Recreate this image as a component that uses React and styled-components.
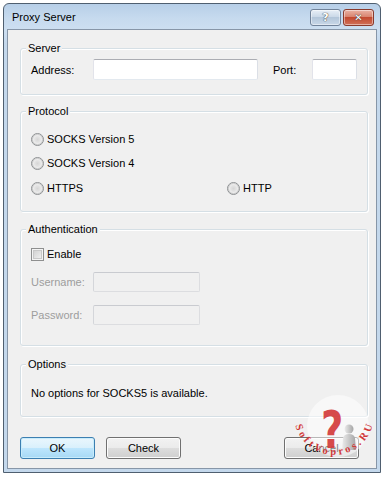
import React from "react";
import styled, { createGlobalStyle } from "styled-components";

const GlobalStyle = createGlobalStyle`
  body {
    margin: 0;
    background: #fff;
    font-family: "Liberation Sans", Arial, sans-serif;
    font-size: 11px;
    color: #000;
  }
`;

const Window = styled.div`
  position: relative;
  box-sizing: border-box;
  margin: 3px 0 0 3px;
  width: 378px;
  height: 470px;
  display: flex;
  flex-direction: column;
  padding: 0 3px 3px;
  border: 1px solid #4f5f70;
  border-radius: 6px 6px 0 0;
  background: linear-gradient(#b7cfe8 0px, #c6daee 14px, #cddff1 26px, #c4d8ec 40px, #c4d8ec 100%);
`;

const TitleBar = styled.div`
  height: 25px;
  display: flex;
  align-items: center;
  padding-left: 5px;
  padding-right: 3px;
`;

const Title = styled.span`
  flex: 1;
  font-size: 11px;
  color: #000;
`;

const CaptionButton = styled.div`
  box-sizing: border-box;
  width: 31px;
  height: 17px;
  margin-top: 1px;
  margin-left: 2px;
  border: 1px solid ${(p) => (p.$close ? "#8a3a2c" : "#71839a")};
  border-radius: 3px;
  display: flex;
  align-items: center;
  justify-content: center;
  font-family: "DejaVu Sans", sans-serif;
  font-weight: bold;
  font-size: ${(p) => (p.$close ? "10px" : "11px")};
  color: #fff;
  text-shadow: 0 0 1px #3a3a3a, 0 0 1px #3a3a3a;
  box-shadow: inset 0 0 0 1px rgba(255, 255, 255, 0.45);
  background: ${(p) =>
    p.$close
      ? "linear-gradient(#eab2a4, #d98570 45%, #c34a30 50%, #d07058 100%)"
      : "linear-gradient(#e8eff7, #cbd9e8 45%, #b3c6da 50%, #c9d8e8 100%)"};
`;

const Client = styled.div`
  flex: 1;
  display: flex;
  flex-direction: column;
  background: #f0f0f0;
  border: 1px solid #8796a8;
  padding: 11px 8px 0 12px;
`;

const Group = styled.fieldset`
  margin: ${(p) => p.$gap}px 0 0;
  padding: 0;
  min-width: 0;
  border: 1px solid #d5dfe5;
  border-radius: 3px;
  box-shadow: inset 1px 1px 0 #fff, 1px 1px 0 #fff;
`;

const Legend = styled.legend`
  margin-left: 5px;
  padding: 0 2px;
  line-height: 14px;
  background: #f0f0f0;
`;

const GroupBody = styled.div`
  display: flex;
  flex-direction: column;
  padding: ${(p) => p.$pt}px 10px ${(p) => p.$pb}px;
`;

const Row = styled.div`
  display: flex;
  align-items: center;
  height: ${(p) => p.$h || 20}px;
  margin-top: ${(p) => p.$mt || 0}px;
`;

const Label = styled.span`
  width: ${(p) => p.$w}px;
  color: ${(p) => (p.$disabled ? "#9d9d9d" : "#000")};
`;

const TextBox = styled.div`
  box-sizing: border-box;
  width: ${(p) => p.$w}px;
  height: ${(p) => p.$h || 21}px;
  border: 1px solid;
  border-radius: 2px;
  border-color: ${(p) =>
    p.$disabled ? "#c9cbd0 #dcdde0 #dcdde0 #d4d6da" : "#abadb3 #dbdfe6 #e3e9ef #e2e3ea"};
  background: ${(p) => (p.$disabled ? "#f0f0f0" : "#fff")};
`;

const Gap = styled.span`
  width: ${(p) => p.$w}px;
`;

const Choice = styled.label`
  display: flex;
  align-items: center;
  gap: 3px;
  width: ${(p) => (p.$w ? `${p.$w}px` : "auto")};
`;

const RadioDot = styled.span`
  box-sizing: border-box;
  width: 13px;
  height: 13px;
  border-radius: 50%;
  border: 1px solid #8e9193;
  background: radial-gradient(circle at 50% 50%, #d6d6d6 0, #e4e4e4 3px, #f4f4f4 5px, #fafafa 6px);
  box-shadow: inset 0 0 0 1px #cfcfcf;
`;

const CheckBox = styled.span`
  box-sizing: border-box;
  width: 13px;
  height: 13px;
  border: 1px solid #8e8f8f;
  background: linear-gradient(135deg, #cbcbcb, #f6f6f6);
  box-shadow: inset 0 0 0 1px #f4f4f4, inset 0 0 0 2px #c8c8c8;
`;

const Note = styled.div`
  line-height: 16px;
`;

const ButtonBar = styled.div`
  display: flex;
  margin-top: 20px;
  padding-right: 1px;
`;

const Button = styled.div`
  box-sizing: border-box;
  width: 75px;
  height: 22px;
  margin-right: ${(p) => p.$mr || 0}px;
  margin-left: ${(p) => (p.$push ? "auto" : "0")};
  display: flex;
  align-items: center;
  justify-content: center;
  border: 1px solid ${(p) => (p.$default ? "#3c7fb1" : "#707070")};
  border-radius: 3px;
  box-shadow: inset 0 0 0 1px ${(p) => (p.$default ? "#c8ecfb" : "#fcfcfc")};
  background: ${(p) =>
    p.$default
      ? "linear-gradient(#eaf6fd, #d9f0fc 50%, #bee6fd 50%, #a7d9f5 100%)"
      : "linear-gradient(#f2f2f2, #ebebeb 50%, #dddddd 50%, #cfcfcf 100%)"};
`;

const Watermark = styled.svg`
  position: absolute;
  left: 286px;
  top: 391px;
  width: 92px;
  height: 72px;
  overflow: visible;
  pointer-events: none;
`;

const Radio = ({ children, w }) => (
  <Choice $w={w}>
    <RadioDot />
    <span>{children}</span>
  </Choice>
);

export default function App() {
  return (
    <>
      <GlobalStyle />
      <Window>
        <TitleBar>
          <Title>Proxy Server</Title>
          <CaptionButton>?</CaptionButton>
          <CaptionButton $close>✕</CaptionButton>
        </TitleBar>
        <Client>
          <Group $gap={0}>
            <Legend>Server</Legend>
            <GroupBody $pt={4} $pb={14}>
              <Row $h={21}>
                <Label $w={62}>Address:</Label>
                <TextBox $w={165} />
                <Gap $w={15} />
                <Label $w={39}>Port:</Label>
                <TextBox $w={45} />
              </Row>
            </GroupBody>
          </Group>

          <Group $gap={9}>
            <Legend>Protocol</Legend>
            <GroupBody $pt={11} $pb={13}>
              <Row>
                <Radio>SOCKS Version 5</Radio>
              </Row>
              <Row $mt={4}>
                <Radio>SOCKS Version 4</Radio>
              </Row>
              <Row $mt={5}>
                <Radio w={196}>HTTPS</Radio>
                <Radio>HTTP</Radio>
              </Row>
            </GroupBody>
          </Group>

          <Group $gap={10}>
            <Legend>Authentication</Legend>
            <GroupBody $pt={8} $pb={20}>
              <Row>
                <Choice>
                  <CheckBox />
                  <span>Enable</span>
                </Choice>
              </Row>
              <Row $mt={8}>
                <Label $w={62} $disabled>
                  Username:
                </Label>
                <TextBox $w={107} $h={20} $disabled />
              </Row>
              <Row $mt={13}>
                <Label $w={62} $disabled>
                  Password:
                </Label>
                <TextBox $w={107} $h={20} $disabled />
              </Row>
            </GroupBody>
          </Group>

          <Group $gap={11}>
            <Legend>Options</Legend>
            <GroupBody $pt={14} $pb={15}>
              <Note>No options for SOCKS5 is available.</Note>
            </GroupBody>
          </Group>

          <ButtonBar>
            <Button $default $mr={11}>
              OK
            </Button>
            <Button>Check</Button>
            <Button $push $mr={8}>
              Cancel
            </Button>
          </ButtonBar>
        </Client>

        <Watermark viewBox="0 0 92 72">
          <defs>
            <path id="wm-arc" d="M 5.4 30.4 A 40 40 0 0 0 82.6 30.4" />
            <linearGradient id="wm-man" x1="0" x2="1">
              <stop offset="0" stopColor="#ececec" />
              <stop offset="1" stopColor="#a5a5a5" />
            </linearGradient>
          </defs>
          <circle cx="48" cy="31" r="31" fill="#ffffff" opacity="0.5" />
          <path d="M52 55 L53 43 Q54 39 59 39 Q64 39 65 43 L66 55 Z" fill="url(#wm-man)" />
          <circle cx="59" cy="34" r="4.5" fill="url(#wm-man)" />
          <text
            x="0"
            y="0"
            fontFamily="DejaVu Sans, sans-serif"
            fontWeight="bold"
            fontSize="52"
            fill="#d33838"
            opacity="0.9"
            transform="translate(31 53) scale(0.74 1)"
          >
            ?
          </text>
          <text
            fontFamily="Liberation Serif, serif"
            fontWeight="bold"
            fontSize="10.5"
            fill="#d23a3a"
          >
            <textPath href="#wm-arc" textLength="104" lengthAdjust="spacing">
              SoftVopros.RU
            </textPath>
          </text>
        </Watermark>
      </Window>
    </>
  );
}
